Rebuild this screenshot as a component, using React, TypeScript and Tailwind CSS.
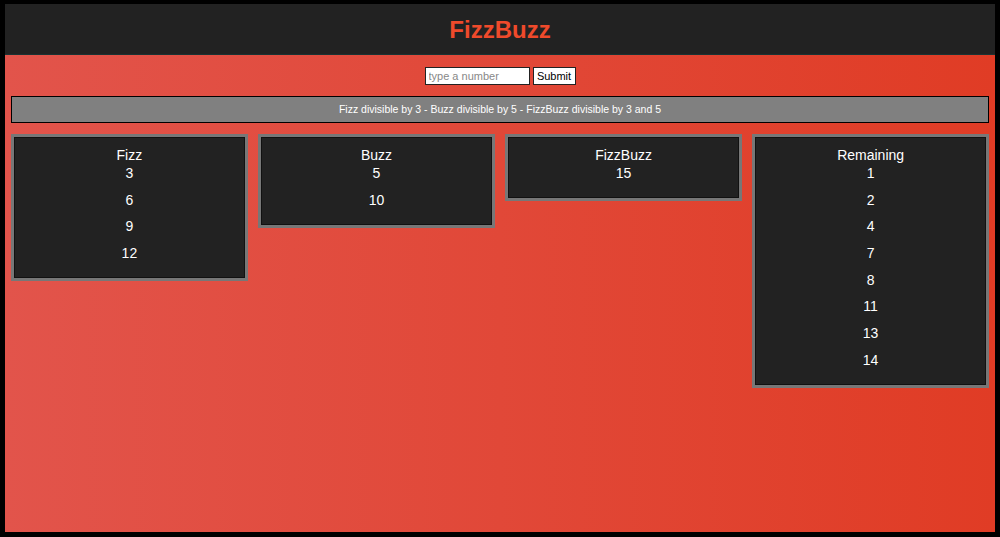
const n = 15;
const nums = Array.from({ length: n }, (_, i) => i + 1);

const groups = [
    { title: "Fizz", items: nums.filter((x) => x % 3 === 0 && x % 5 !== 0) },
    { title: "Buzz", items: nums.filter((x) => x % 5 === 0 && x % 3 !== 0) },
    { title: "FizzBuzz", items: nums.filter((x) => x % 15 === 0) },
    { title: "Remaining", items: nums.filter((x) => x % 3 !== 0 && x % 5 !== 0) },
];

function Card({ title, items }: { title: string; items: number[] }) {
    return (
        <div className="border-[3px] border-[#777] bg-[#222] shadow-[inset_0_0_0_1px_#111] pt-[9px] pb-[16px] text-center text-white text-[14px]">
            <h2 className="leading-[18px]">{title}</h2>
            <ul className="flex flex-col gap-[8.67px]">
                {items.map((x) => (
                    <li key={x} className="leading-[18px]">{x}</li>
                ))}
            </ul>
        </div>
    );
}

export default function App() {
    return (
        <div
            className="w-[1000px] h-[537px] bg-black pt-[4px] pl-[5px] pr-[5px] pb-[5px] flex flex-col"
            style={{ fontFamily: '"Liberation Sans", Arial, sans-serif' }}
        >
            {/* Header */}
            <header className="h-[51px] shrink-0 bg-[#222] border-b border-[#1b3333] flex items-center justify-center pt-[1px]">
                <h1 className="text-[24px] font-bold text-[#ef4a2b] leading-none">FizzBuzz</h1>
            </header>

            <main className="flex-1 bg-[linear-gradient(90deg,#e2544b,#e03c25)] px-[6px]">
                {/* Input */}
                <div className="flex justify-center gap-[3px] pt-[12px]">
                    <input
                        type="text"
                        placeholder="type a number"
                        className="w-[105px] h-[18px] bg-white border border-[#222] px-[3px] text-[11px] text-black placeholder:text-[#888] outline-none"
                    />
                    <button className="w-[43px] h-[18px] bg-white border border-[#222] text-[11px] text-black leading-none">
                        Submit
                    </button>
                </div>

                {/* Rules */}
                <div className="mt-[11px] h-[27px] bg-[#808080] border border-black flex items-center justify-center text-white text-[10.5px]">
                    Fizz divisible by 3 - Buzz divisible by 5 - FizzBuzz divisible by 3 and 5
                </div>

                {/* Results */}
                <div className="mt-[11px] grid grid-cols-4 gap-[10.3px] items-start">
                    {groups.map((g) => (
                        <Card key={g.title} title={g.title} items={g.items} />
                    ))}
                </div>
            </main>
        </div>
    );
}
